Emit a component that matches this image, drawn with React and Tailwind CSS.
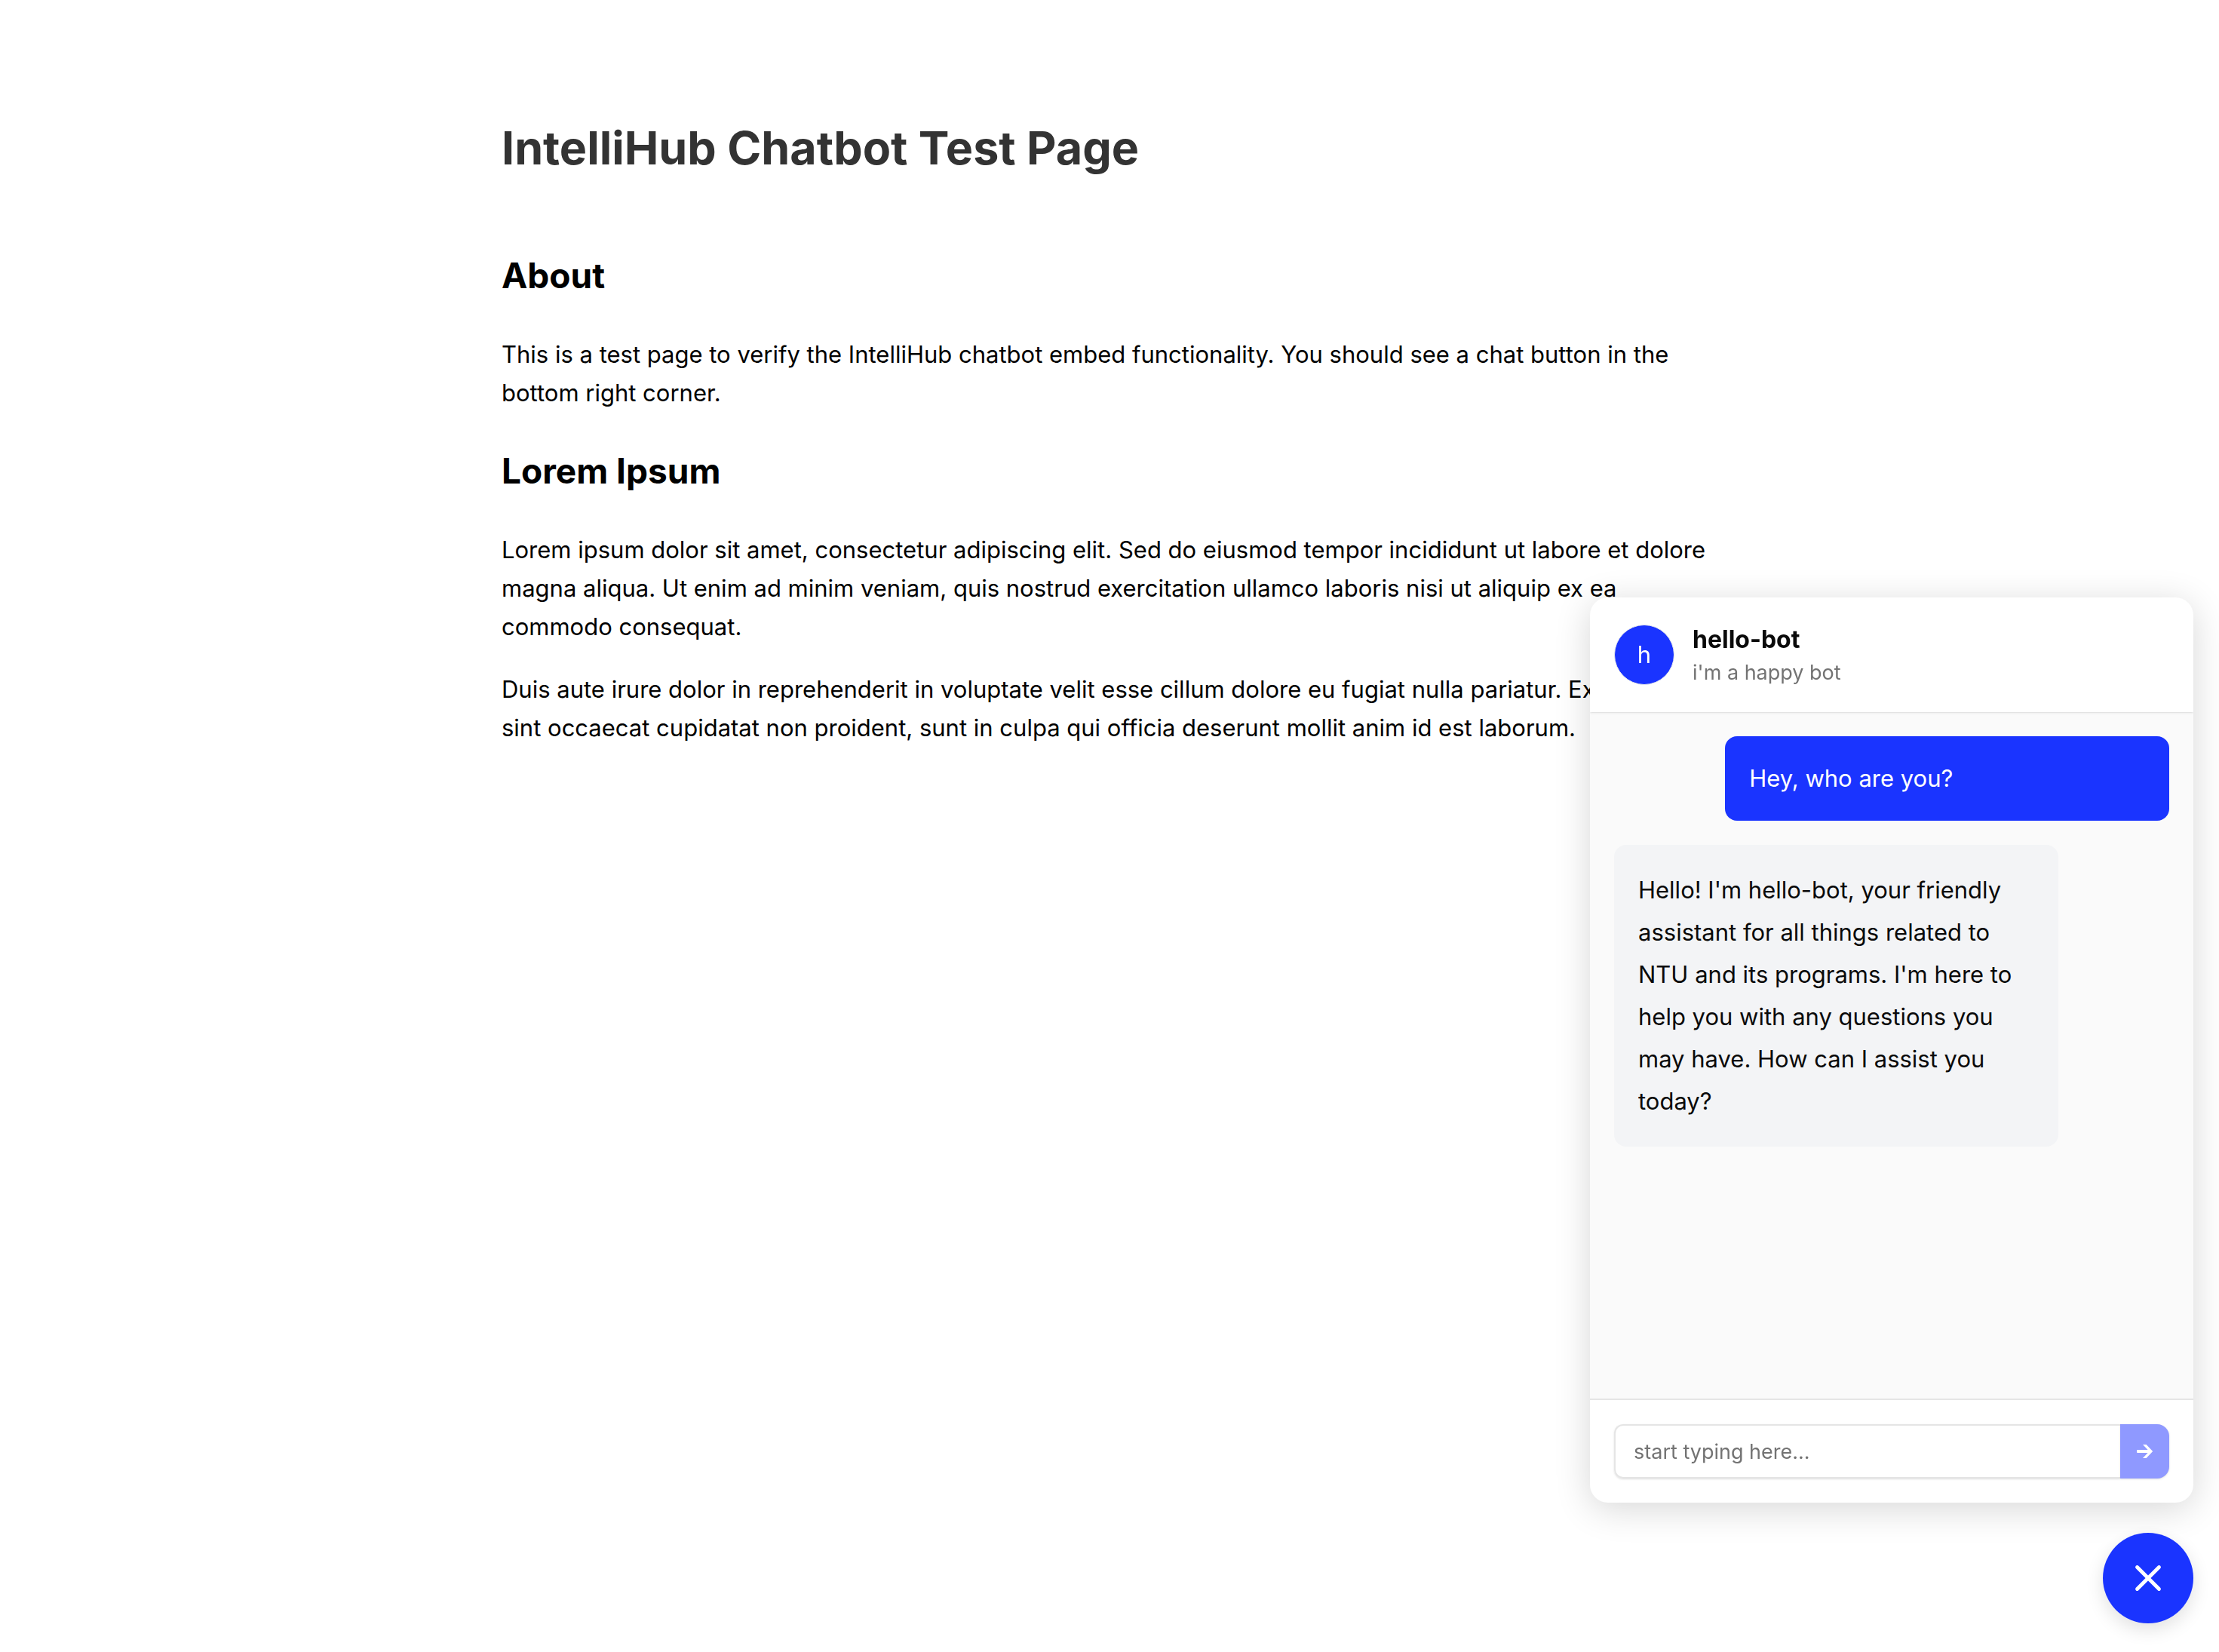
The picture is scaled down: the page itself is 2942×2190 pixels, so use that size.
import { X } from 'lucide-react';

function Article() {
  return (
    <main className="pr-3 font-['Inter',sans-serif] text-[31px] leading-[51px] text-black">
      <div className="mx-auto max-w-[1600px] pt-[145px]">
        <h1 className="text-[61px] leading-[102px] font-bold text-[#333333]">IntelliHub Chatbot Test Page</h1>
        <h2 className="mt-20 text-[46px] leading-[77px] font-bold">About</h2>
        <p className="mt-10">
          This is a test page to verify the IntelliHub chatbot embed functionality. You should see a chat button in the
          bottom right corner.
        </p>
        <h2 className="mt-10 text-[46px] leading-[77px] font-bold">Lorem Ipsum</h2>
        <p className="mt-10">
          Lorem ipsum dolor sit amet, consectetur adipiscing elit. Sed do eiusmod tempor incididunt ut labore et dolore
          magna aliqua. Ut enim ad minim veniam, quis nostrud exercitation ullamco laboris nisi ut aliquip ex ea
          commodo consequat.
        </p>
        <p className="mt-8">
          Duis aute irure dolor in reprehenderit in voluptate velit esse cillum dolore eu fugiat nulla pariatur.
          Excepteur sint occaecat cupidatat non proident, sunt in culpa qui officia deserunt mollit anim id est
          laborum.
        </p>
      </div>
    </main>
  );
}

function SendArrow() {
  return (
    <svg viewBox="0 0 22 18" width="22" height="18" fill="currentColor" aria-hidden="true">
      <path d="M8 0h4.6L21.2 9l-8.6 9H8l6.6-6.9H1a1 1 0 0 1-1-1V7.9a1 1 0 0 1 1-1h13.6z" />
    </svg>
  );
}

function ChatPanel() {
  return (
    <section
      aria-label="hello-bot chat"
      className="flex h-[1200px] w-[800px] flex-col overflow-hidden rounded-3xl bg-white font-['Inter',sans-serif] text-[#0a0a0a] shadow-[0_8px_48px_rgba(0,0,0,0.16)]"
    >
      <header className="z-10 flex h-[152px] shrink-0 items-center gap-6 px-8 shadow-sm">
        <div className="flex size-20 items-center justify-center rounded-full border border-gray-200 bg-[#1a34ff] text-[31px] text-white">
          h
        </div>
        <div>
          <h3 className="text-[32px] leading-[48px] font-bold">hello-bot</h3>
          <p className="text-[27px] leading-[40px] text-[#737373]">i'm a happy bot</p>
        </div>
      </header>
      <div className="flex flex-1 flex-col gap-8 bg-[#fafafa] p-8 text-[31px]">
        <p className="w-4/5 self-end rounded-2xl bg-[#1a34ff] p-8 leading-[48px] text-white">Hey, who are you?</p>
        <p className="w-4/5 rounded-2xl bg-gray-100 p-8 leading-[56px]">
          Hello! I'm hello-bot, your friendly assistant for all things related to NTU and its programs. I'm here to
          help you with any questions you may have. How can I assist you today?
        </p>
      </div>
      <form className="flex border-t-2 border-neutral-200 p-8" onSubmit={(e) => e.preventDefault()}>
        <input
          type="text"
          aria-label="Message"
          placeholder="start typing here..."
          className="h-[72px] min-w-0 flex-1 rounded-l-xl border-2 border-r-0 border-neutral-200 px-6 text-[27px] shadow-sm outline-none placeholder:text-[#737373]"
        />
        <button
          type="submit"
          aria-label="Send"
          className="flex h-[72px] w-[65px] items-center justify-center rounded-r-2xl bg-[#8f99ff] text-white shadow-sm"
        >
          <SendArrow />
        </button>
      </form>
    </section>
  );
}

export default function App() {
  return (
    <div className="min-h-screen bg-white">
      <Article />
      <aside className="fixed right-[34px] bottom-[38px] flex flex-col items-end gap-10">
        <ChatPanel />
        <button
          type="button"
          aria-label="Close chat"
          className="flex size-[120px] items-center justify-center rounded-full bg-[#1a34ff] text-white shadow-[0_8px_24px_rgba(0,0,0,0.12)]"
        >
          <X size={58} />
        </button>
      </aside>
    </div>
  );
}
